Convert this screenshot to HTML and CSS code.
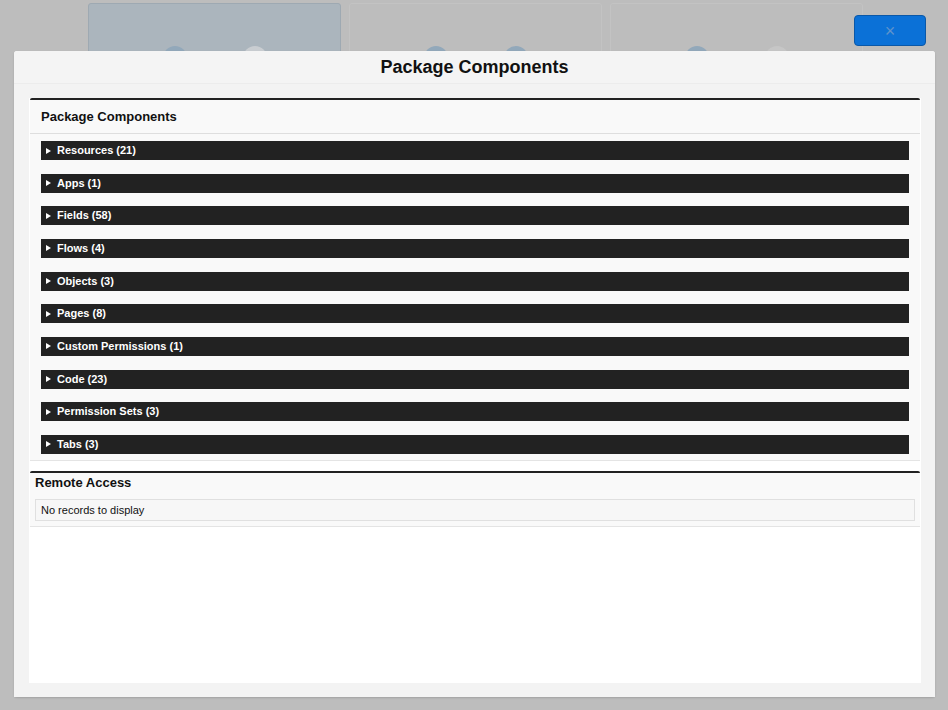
FILE: index.html
```html
<!DOCTYPE html>
<html>
<head>
<meta charset="utf-8">
<link rel="stylesheet" href="styles.css">
</head>
<body>
<div class="backdrop">
  <div class="cards">
    <div class="card card-active"><span class="dot dot-blue"></span><span class="dot dot-light"></span></div>
    <div class="card"><span class="dot dot-blue"></span><span class="dot dot-blue"></span></div>
    <div class="card"><span class="dot dot-blue"></span><span class="dot dot-grey"></span></div>
  </div>
</div>
<button class="close-btn">×</button>
<div class="modal">
  <div class="modal-header">Package Components</div>
  <div class="modal-body">
    <div class="scroll">
      <div class="panel">
        <div class="panel-header">Package Components</div>
        <div class="panel-body">
          <div class="row"><span class="tri"></span>Resources (21)</div>
          <div class="row"><span class="tri"></span>Apps (1)</div>
          <div class="row"><span class="tri"></span>Fields (58)</div>
          <div class="row"><span class="tri"></span>Flows (4)</div>
          <div class="row"><span class="tri"></span>Objects (3)</div>
          <div class="row"><span class="tri"></span>Pages (8)</div>
          <div class="row"><span class="tri"></span>Custom Permissions (1)</div>
          <div class="row"><span class="tri"></span>Code (23)</div>
          <div class="row"><span class="tri"></span>Permission Sets (3)</div>
          <div class="row"><span class="tri"></span>Tabs (3)</div>
        </div>
      </div>
      <div class="panel panel-remote">
        <div class="remote-header">Remote Access</div>
        <div class="remote-body">
          <div class="empty">No records to display</div>
        </div>
      </div>
    </div>
  </div>
</div>
</body>
</html>
```
FILE: styles.css
```css
html, body {
  margin: 0;
  padding: 0;
  width: 948px;
  height: 710px;
  overflow: hidden;
  background: #bdbdbd;
  font-family: "Liberation Sans", Arial, sans-serif;
}

.backdrop {
  padding: 3px 0 0 88px;
}

.cards {
  display: flex;
  gap: 8px;
}

.card {
  box-sizing: border-box;
  width: 253px;
  height: 70px;
  border: 1px solid #c3c3c3;
  border-radius: 3px;
  display: flex;
  justify-content: center;
  gap: 56px;
  padding-top: 42px;
}

.card-active {
  background: #abb5bd;
  border-color: #9ea9b2;
}

.dot {
  width: 24px;
  height: 24px;
  border-radius: 50%;
  background: #92a8ba;
}

.dot-light {
  background: #c9cdd1;
}

.dot-grey {
  background: #c6c6c6;
}

.close-btn {
  position: absolute;
  left: 854px;
  top: 15px;
  width: 72px;
  height: 31px;
  box-sizing: border-box;
  background: #0b71d7;
  border: 1px solid #0a58a8;
  border-radius: 4px;
  color: #5e93cc;
  font-family: "Liberation Sans", Arial, sans-serif;
  font-size: 18px;
  line-height: 26px;
  padding: 0;
}

.modal {
  position: absolute;
  left: 14px;
  top: 51px;
  width: 921px;
  height: 646px;
  background: #f3f3f3;
  border-radius: 3px;
  box-shadow: 0 1px 2px rgba(0, 0, 0, 0.15);
  display: flex;
  flex-direction: column;
}

.modal-header {
  height: 32px;
  line-height: 32px;
  text-align: center;
  font-size: 18px;
  font-weight: bold;
  color: #111;
  background: #f4f4f4;
  border-bottom: 1px solid #ececec;
  border-radius: 3px 3px 0 0;
}

.modal-body {
  flex: 1;
  padding: 14px 14px 14px 15px;
  display: flex;
  background: #f3f3f3;
}

.scroll {
  flex: 1;
  background: #ffffff;
  padding: 0 1px;
}

.panel {
  background: #f9f9f9;
  border-top: 2px solid #222;
  border-bottom: 1px solid #e4e4e4;
  border-radius: 2px 2px 0 0;
}

.panel-header {
  height: 33px;
  line-height: 33px;
  padding-left: 11px;
  font-size: 13px;
  font-weight: bold;
  color: #111;
  border-bottom: 1px solid #dedede;
}

.panel-body {
  padding: 7px 11px 6px 11px;
  display: flex;
  flex-direction: column;
  gap: 13.67px;
}

.row {
  height: 19px;
  background: #222222;
  color: #ffffff;
  font-size: 11px;
  font-weight: bold;
  line-height: 19px;
  display: flex;
  align-items: center;
  padding-left: 5px;
}

.tri {
  width: 0;
  height: 0;
  border-top: 3.5px solid transparent;
  border-bottom: 3.5px solid transparent;
  border-left: 5px solid #ffffff;
  margin-right: 6px;
}

.panel-remote {
  margin-top: 10px;
  border-bottom: 1px solid #e4e4e4;
}

.remote-header {
  height: 24px;
  line-height: 20px;
  padding-left: 5px;
  font-size: 13px;
  font-weight: bold;
  color: #111;
}

.remote-body {
  padding: 2px 5px 5px 5px;
}

.empty {
  height: 20px;
  line-height: 20px;
  border: 1px solid #e0e0e0;
  background: #f7f7f7;
  padding-left: 5px;
  font-size: 11px;
  color: #111;
}
```
